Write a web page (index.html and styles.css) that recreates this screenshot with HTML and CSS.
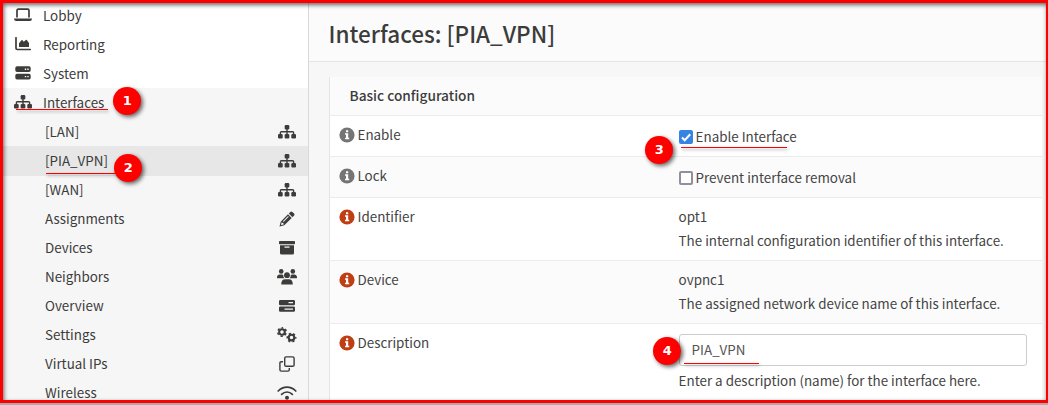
FILE: index.html
```html
<!DOCTYPE html>
<html lang="en">

<head>
    <meta charset="UTF-8">
    <meta name="viewport" content="width=device-width, initial-scale=1.0">
    <title>Interfaces: [PIA_VPN]</title>
    <link rel="stylesheet" href="styles.css">
</head>

<body>
    <svg class="sprite" width="0" height="0">
        <symbol id="laptop" viewBox="0 0 18 14">
            <path d="M3 9.5V2.5Q3 1.2 4.300 1.200H13.700Q15 1.200 15 2.500V9.500" fill="none" stroke="currentColor" stroke-width="1.700" />
            <path d="M0 10.500H18Q17.900 13 15.800 13H2.200Q.1 13 0 10.500Z" />
        </symbol>
        <symbol id="chart" viewBox="0 0 16 14">
            <path d="M1 .8V11.200Q1 12.500 2.300 12.500H15.200" fill="none" stroke="currentColor" stroke-width="1.700" stroke-linecap="round" />
            <path d="M4 9.500V6.300L6.500 3.300Q7 2.800 7.500 3.300L8.800 4.700L10.800 3Q11.300 2.600 11.800 3.100L14 6V9.500Q14 10 13.500 10H4.500Q4 10 4 9.500Z" />
        </symbol>
        <symbol id="server" viewBox="0 0 16 14">
            <path fill-rule="evenodd" d="M2 .3H14Q15.700.3 15.700 2V4.300Q15.700 6 14 6H2Q.3 6 .3 4.300V2Q.3.3 2 .3ZM9.800 2.500V3.900H11.200V2.500ZM12.300 2.500V3.900H13.700V2.500Z" />
            <path fill-rule="evenodd" d="M2 7.700H14Q15.700 7.700 15.700 9.400V11.700Q15.700 13.400 14 13.400H2Q.3 13.400.3 11.700V9.400Q.3 7.700 2 7.700ZM9.800 9.900V11.300H11.200V9.900ZM12.300 9.900V11.300H13.700V9.900Z" />
        </symbol>
        <symbol id="sitemap" viewBox="0 0 18 14">
            <rect x="6.700" y="0" width="4.600" height="4.500" rx="1.200" />
            <rect x="0" y="8.900" width="4.700" height="4.600" rx="1.200" />
            <rect x="6.650" y="8.900" width="4.700" height="4.600" rx="1.200" />
            <rect x="13.300" y="8.900" width="4.700" height="4.600" rx="1.200" />
            <path d="M9 4V9M2.400 9.500V7.600Q2.400 6.700 3.300 6.700H14.700Q15.600 6.700 15.600 7.600V9.500" fill="none" stroke="currentColor" stroke-width="1.400" />
        </symbol>
        <symbol id="pencil" viewBox="0 0 16 16">
            <path fill-rule="evenodd" d="M9 3.300L12.700 7L5.300 14.300L.5 15.500L1.700 10.700ZM2.600 11.300L2 14L4.700 13.400L4.500 12.200L3.700 12.100ZM9.100 5.100L3.900 10.300L4.500 10.900L9.700 5.700Z" />
            <path d="M9.800 2.500L11.400.9Q12.400 0 13.400.9L15.100 2.600Q16 3.600 15.100 4.600L13.500 6.200Z" />
        </symbol>
        <symbol id="archive" viewBox="0 0 16 14">
            <rect x="0" y="0" width="16" height="3.200" rx=".8" />
            <path fill-rule="evenodd" d="M1 4.200H15V12Q15 13.500 13.500 13.500H2.500Q1 13.500 1 12ZM5.500 5.600V6.800H10.500V5.600Z" />
        </symbol>
        <symbol id="users" viewBox="0 0 20 16">
            <circle cx="4.200" cy="2.400" r="2.300" />
            <circle cx="15.800" cy="2.400" r="2.300" />
            <circle cx="10" cy="6.200" r="2.900" />
            <path d="M0 9V8.300Q.3 5.600 2.800 5.600H4.800Q5.700 5.600 6.300 6Q6 8 7.300 9.200H.3ZM20 9V8.300Q19.700 5.600 17.200 5.600H15.200Q14.300 5.600 13.700 6Q14 8 12.700 9.200H19.700Z" />
            <path d="M4.200 15.500Q4.200 10.300 8.200 10.300H11.800Q15.800 10.300 15.800 15.500Z" />
        </symbol>
        <symbol id="tasks" viewBox="0 0 16 12">
            <path fill-rule="evenodd" d="M1.300 0H14.700Q16 0 16 1.300V3.900Q16 5.200 14.700 5.200H1.300Q0 5.200 0 3.900V1.300Q0 0 1.300 0ZM9.500 1.900V3.300H14V1.900Z" />
            <path fill-rule="evenodd" d="M1.300 6.500H14.700Q16 6.500 16 7.800V10.400Q16 11.700 14.700 11.700H1.300Q0 11.700 0 10.400V7.800Q0 6.500 1.300 6.500ZM5.500 8.400V9.800H14V8.400Z" />
        </symbol>
        <symbol id="cogs" viewBox="0 0 20 16">
            <g fill="none" stroke="currentColor">
                <circle cx="5" cy="5" r="2.800" stroke-width="2.100" />
                <circle cx="5" cy="5" r="4.200" stroke-width="1.600" stroke-dasharray="2.200 2.198" stroke-dashoffset="1.100" transform="rotate(-90 5 5)" />
                <circle cx="14.500" cy="10.600" r="2.800" stroke-width="2.100" />
                <circle cx="14.500" cy="10.600" r="4.200" stroke-width="1.600" stroke-dasharray="2.200 2.198" stroke-dashoffset="1.100" />
            </g>
        </symbol>
        <symbol id="clone" viewBox="0 0 16 16">
            <g fill="none" stroke="currentColor" stroke-width="1.400">
                <rect x="5.700" y=".9" width="9.400" height="9.400" rx="1.400" />
                <path d="M4 5.700H2.300Q.9 5.700.9 7.100V13.700Q.9 15.100 2.300 15.100H8.900Q10.300 15.100 10.300 13.700V12" />
            </g>
        </symbol>
        <symbol id="wifi" viewBox="0 0 20 14">
            <g fill="none" stroke="currentColor" stroke-width="1.700" stroke-linecap="round">
                <path d="M1.200 5Q5 1.200 10 1.200T18.800 5" />
                <path d="M4.600 8.300Q7 6 10 6T15.400 8.300" />
            </g>
            <circle cx="10" cy="11.700" r="2" />
        </symbol>
        <symbol id="info" viewBox="0 0 16 16">
            <circle cx="8" cy="8" r="7.600" />
            <path d="M7 3.200H9.200V5.200H7ZM6 6.300H9.200V10.800H10.200V12.300H6V10.800H7V7.800H6Z" fill="#fff" />
        </symbol>
    </svg>

    <div class="page">
        <nav class="sidebar">
            <a class="item"><svg class="lead"><use href="#laptop" /></svg>Lobby</a>
            <a class="item"><svg class="lead"><use href="#chart" /></svg>Reporting</a>
            <a class="item"><svg class="lead"><use href="#server" /></svg>System</a>
            <div class="group">
                <a class="item"><svg class="lead"><use href="#sitemap" /></svg>Interfaces</a>
                <a class="item sub">[LAN]<svg><use href="#sitemap" /></svg></a>
                <a class="item sub active">[PIA_VPN]<svg><use href="#sitemap" /></svg></a>
                <a class="item sub">[WAN]<svg><use href="#sitemap" /></svg></a>
                <a class="item sub">Assignments<svg class="tall"><use href="#pencil" /></svg></a>
                <a class="item sub">Devices<svg><use href="#archive" /></svg></a>
                <a class="item sub">Neighbors<svg class="tall"><use href="#users" /></svg></a>
                <a class="item sub">Overview<svg class="short"><use href="#tasks" /></svg></a>
                <a class="item sub">Settings<svg class="tall"><use href="#cogs" /></svg></a>
                <a class="item sub">Virtual IPs<svg class="tall"><use href="#clone" /></svg></a>
                <a class="item sub">Wireless<svg><use href="#wifi" /></svg></a>
            </div>
        </nav>

        <main class="main">
            <header class="page-head">
                <h1>Interfaces: [PIA_VPN]</h1>
            </header>
            <section class="panel">
                <div class="panel-head">Basic configuration</div>
                <div class="row">
                    <div class="label"><svg class="info"><use href="#info" /></svg>Enable</div>
                    <label class="check"><input type="checkbox" checked><span class="box"><svg viewBox="0 0 14 14"><path d="M3 7.500L5.700 10.200L11.200 4.200" /></svg></span>Enable Interface</label>
                </div>
                <div class="row alt">
                    <div class="label"><svg class="info"><use href="#info" /></svg>Lock</div>
                    <label class="check"><input type="checkbox"><span class="box"></span>Prevent interface removal</label>
                </div>
                <div class="row">
                    <div class="label"><svg class="info red"><use href="#info" /></svg>Identifier</div>
                    <div class="value">
                        <div>opt1</div>
                        <div>The internal configuration identifier of this interface.</div>
                    </div>
                </div>
                <div class="row alt">
                    <div class="label"><svg class="info red"><use href="#info" /></svg>Device</div>
                    <div class="value">
                        <div>ovpnc1</div>
                        <div>The assigned network device name of this interface.</div>
                    </div>
                </div>
                <div class="row last">
                    <div class="label"><svg class="info red"><use href="#info" /></svg>Description</div>
                    <div class="value">
                        <input class="field" type="text" value="PIA_VPN">
                        <div>Enter a description (name) for the interface here.</div>
                    </div>
                </div>
            </section>
        </main>
    </div>

    <!-- step markers -->
    <div class="line line-1"></div>
    <div class="line line-2"></div>
    <div class="line line-3"></div>
    <div class="line line-4"></div>
    <div class="step step-1">1</div>
    <div class="step step-2">2</div>
    <div class="step step-3">3</div>
    <div class="step step-4">4</div>
    <div class="frame"></div>
</body>

</html>
```
FILE: styles.css
```css
* {
    box-sizing: border-box;
}

body {
    margin: 0;
    height: 405px;
    overflow: hidden;
    position: relative;
    font-family: "Noto Sans CJK SC", sans-serif;
    font-size: 13.4px;
    line-height: 24px;
    color: #3c3c3b;
    background: #fff;
}

svg {
    fill: currentColor;
}

.sprite {
    position: absolute;
}

.page {
    display: flex;
    height: 405px;
    overflow: hidden;
}

.sidebar {
    width: 309px;
    flex: none;
    padding-top: 1px;
    border-right: 1px solid #d9d9d9;
}

.group {
    background: #f6f6f6;
}

.item {
    display: flex;
    align-items: center;
    height: 29px;
    padding: 0 0 1px 14px;
}

.item svg {
    width: 20px;
    height: 14px;
}

.item .lead {
    width: 18px;
    margin-right: 11px;
}

.item.sub {
    justify-content: space-between;
    padding: 0 12px 1px 45px;
}

.item.sub svg {
    margin: 1px -1px 0 0;
}

.item svg.tall {
    height: 16px;
}

.item svg.short {
    height: 12px;
}

.item.active {
    background: #e7e7e7;
    box-shadow: 0 1px #e7e7e7;
}

.main {
    flex: 1;
    background: #f7f7f7;
}

.page-head {
    height: 62px;
    padding: 16px 19.5px 0;
    background: #fbfbfb;
    border-bottom: 1px solid #e5e5e5;
}

h1 {
    margin: 0;
    font-size: 22.5px;
    font-weight: 500;
    line-height: 34px;
}

.panel {
    margin: 15px 6px 0 20px;
    border-left: 1px solid #e5e5e5;
    background: #fff;
}

.panel-head {
    height: 39px;
    padding: 6px 19.5px 7px;
    background: #fbfbfb;
    border-bottom: 1px solid #ebebeb;
    font-size: 13.7px;
    font-weight: 500;
}

.row {
    display: flex;
    padding: 6px 10px 8px;
    border-bottom: 1px solid #ebebeb;
    color: #444;
}

.row.last {
    height: 90px;
}

.alt {
    background: #fbfbfb;
}

.label {
    display: flex;
    width: 338.6px;
    flex: none;
}

.info {
    width: 16px;
    height: 16px;
    margin: 5px 2.5px 0 -1px;
    color: #757575;
}

.info.red {
    color: #c03e14;
}

.check {
    display: flex;
    height: 26px;
    padding-top: 2px;
}

.check input {
    display: none;
}

.box {
    width: 14px;
    height: 14px;
    margin: 6px 3px 0 0;
    border: 2px solid #8f8f9d;
    border-radius: 2px;
    background: #fff;
}

.box svg {
    display: none;
    width: 14px;
    height: 14px;
    fill: none;
    stroke: #fff;
    stroke-width: 2;
}

input:checked + .box {
    border: 0;
    background: #3584e4;
}

input:checked + .box svg {
    display: block;
}

.value {
    flex: 1;
}

.field {
    display: block;
    width: 348px;
    height: 32px;
    margin: 4px 0 2px;
    padding: 0 12px 2px;
    border: 1px solid #ccc;
    border-radius: 3px;
    font: inherit;
    color: #555;
    background: #fff;
}

.line {
    position: absolute;
    height: 1px;
    background: #f00;
    box-shadow: 1px 2px 3px rgba(0, 0, 0, 0.35);
}

.line-1 {
    left: 16px;
    top: 109px;
    width: 92px;
}

.line-2 {
    left: 46px;
    top: 173px;
    width: 74px;
}

.line-3 {
    left: 681px;
    top: 147px;
    width: 106px;
}

.line-4 {
    left: 684px;
    top: 363px;
    width: 75px;
}

.step {
    position: absolute;
    width: 28px;
    height: 28px;
    border-radius: 50%;
    background: #f00;
    color: #fff;
    font: bold 13px/28px "DejaVu Sans", sans-serif;
    text-align: center;
    box-shadow: 2px 2px 4px rgba(0, 0, 0, 0.6);
}

.step-1 {
    left: 113.4px;
    top: 87.4px;
}

.step-2 {
    left: 114.4px;
    top: 154.4px;
}

.step-3 {
    left: 645.4px;
    top: 136.4px;
}

.step-4 {
    left: 653.4px;
    top: 337.4px;
}

.frame {
    position: absolute;
    left: 0;
    top: 0;
    width: 1048px;
    height: 403px;
    border: 3px solid #f00;
    border-right-width: 2px;
    box-shadow: inset 1px 2px 4px rgba(0, 0, 0, 0.6), 0 2px 0 #aaa;
}
```
